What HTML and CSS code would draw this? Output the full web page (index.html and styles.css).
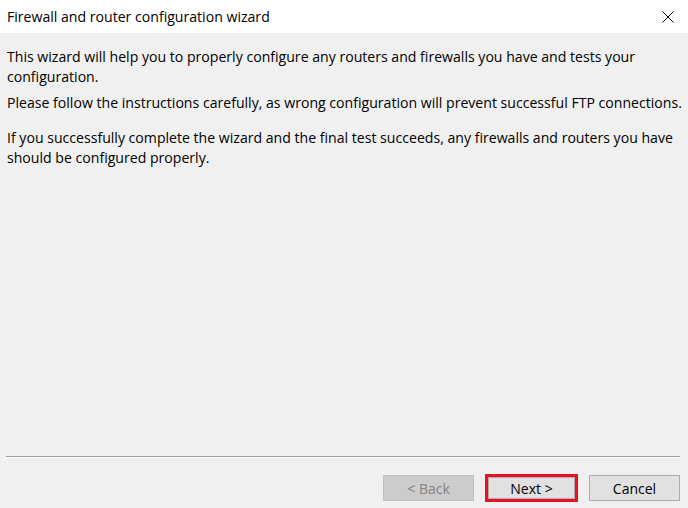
FILE: index.html
```html
<!DOCTYPE html>
<html>
<head>
<meta charset="utf-8">
<link rel="stylesheet" href="styles.css">
</head>
<body>
<div class="dialog">
  <div class="titlebar">
    <span class="title">Firewall and router configuration wizard</span>
    <svg class="close" width="12" height="12" viewBox="0 0 12 12"><path d="M0.5 0.5 L11.5 11.5 M11.5 0.5 L0.5 11.5" stroke="#000" stroke-width="1" fill="none"/></svg>
  </div>
  <div class="content">
    <p class="p1">This wizard will help you to properly configure any routers and firewalls you have and tests your configuration.</p>
    <p class="p2">Please follow the instructions carefully, as wrong configuration will prevent successful FTP connections.</p>
    <p class="p3">If you successfully complete the wizard and the final test succeeds, any firewalls and routers you have should be configured properly.</p>
  </div>
  <div class="separator"></div>
  <div class="buttons">
    <button class="btn disabled">&lt; Back</button>
    <div class="highlight"><button class="btn">Next &gt;</button></div>
    <button class="btn cancel">Cancel</button>
  </div>
</div>
</body>
</html>
```
FILE: styles.css
```css
html, body {
  margin: 0;
  padding: 0;
}
body {
  width: 688px;
  height: 508px;
  overflow: hidden;
  font-family: "Open Sans", "Noto Sans", sans-serif;
}
.dialog {
  width: 688px;
  height: 508px;
  background: #f0f0f0;
  display: flex;
  flex-direction: column;
}
.titlebar {
  height: 33px;
  background: #ffffff;
  display: flex;
  align-items: center;
  justify-content: space-between;
  padding: 0 14px 0 7px;
  flex: none;
}
.title {
  font-size: 14.1px;
  color: #000;
}
.close {
  display: block;
}
.content {
  flex: 1;
  padding: 14px 4px 0 7px;
  color: #000;
  font-size: 14.1px;
  line-height: 20px;
}
.content p {
  margin: 0;
}
.content .p1 {
  margin-bottom: 6px;
}
.content .p2 {
  margin-bottom: 15px;
  white-space: nowrap;
}
.separator {
  margin: 0 8px 0 6px;
  height: 1px;
  background: #a0a0a0;
  border-bottom: 1px solid #ffffff;
  flex: none;
}
.buttons {
  display: flex;
  justify-content: flex-end;
  align-items: center;
  gap: 11px;
  padding: 16px 8px 6px 0;
  flex: none;
}
.btn {
  width: 91px;
  height: 26px;
  box-sizing: border-box;
  background: #e1e1e1;
  border: 1px solid #adadad;
  font-family: inherit;
  font-size: 14px;
  color: #000;
  padding: 0;
  margin: 0;
}
.btn.disabled {
  background: #cccccc;
  border-color: #bfbfbf;
  color: #838383;
}
.highlight {
  border: 3px solid #e81123;
  box-sizing: border-box;
  width: 93px;
  height: 28px;
  display: flex;
}
.highlight .btn {
  width: 87px;
  height: 22px;
  border: 1px solid #adadad;
}
```
